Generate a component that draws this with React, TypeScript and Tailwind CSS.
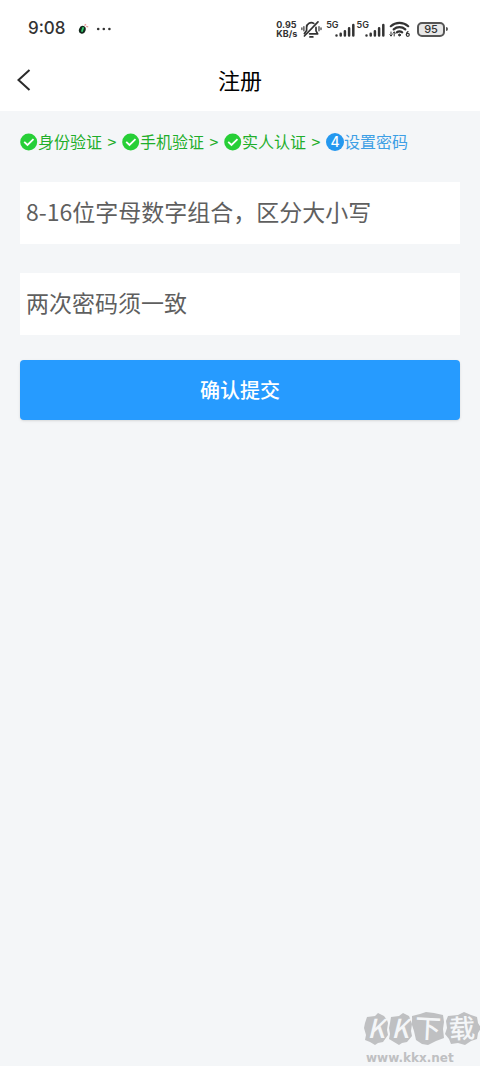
const steps = [
  { id: 1, label: "身份验证", done: true },
  { id: 2, label: "手机验证", done: true },
  { id: 3, label: "实人认证", done: true },
  { id: 4, label: "设置密码", done: false },
];

const fields = [
  { id: "password", label: "密码", placeholder: "8-16位字母数字组合，区分大小写" },
  { id: "confirm", label: "确认密码", placeholder: "两次密码须一致" },
];

function Signal() {
  return (
    <div className="flex items-start">
      <span className="text-[9px] leading-[10px] font-semibold">5G</span>
      <svg className="-ml-1 mt-0.5 h-4 w-5" viewBox="0 0 20 16" fill="none" stroke="#333" strokeWidth="2.5" strokeLinecap="round">
        <path d="M1.5 13.4v.1M5.7 11.7v1.8M9.9 9.2v4.3M14.1 6.2v7.3M18.3 3v10.5" />
      </svg>
    </div>
  );
}

function StatusBar() {
  return (
    <div className="flex h-[58px] items-center justify-between pr-8 pl-7 font-['Inter',sans-serif] text-[#333]">
      <div className="flex items-center">
        <span className="text-[17px] font-medium">9:08</span>
        <svg className="ml-3 size-3" viewBox="0 0 12 12" fill="none">
          <ellipse cx="4.3" cy="6.8" rx="3.3" ry="4" transform="rotate(20 4.3 6.8)" fill="#15281d" />
          <path d="M5.3 4.2 3.8 8.8" stroke="#35cf70" strokeWidth="1.8" />
          <path d="M6.5 2.6 8 1.2M8.2 3.4l2 .5" stroke="#e99b9b" strokeWidth="1.3" />
        </svg>
        <svg className="ml-1.5 h-1 w-4" viewBox="0 0 16 4" fill="#333">
          <circle cx="2.2" cy="2" r="1.3" />
          <circle cx="7.8" cy="2" r="1.3" />
          <circle cx="13.4" cy="2" r="1.3" />
        </svg>
      </div>
      <div className="flex items-center">
        <div className="text-[9px] leading-[9px] font-bold">
          <p>0.95</p>
          <p>KB/s</p>
        </div>
        <svg className="mx-1 h-5 w-[21px]" viewBox="0 0 21 20" fill="none" stroke="#333" strokeWidth="1.7" strokeLinecap="round" strokeLinejoin="round">
          <path d="M5.6 11.6V8.4a4.7 4.7 0 0 1 7.2-4M15 8.4v3.4l1.7 3H8.6M3.4 17 17 2.8M3.4 14.6l2.2-3" />
          <path d="M9 17.9h2.8" strokeWidth="1.8" />
          <path d="M2.9 7.6v4.2M.9 8.8v1.8M18 7.6v4.2M20 8.8v1.8" strokeWidth="1.2" />
        </svg>
        <div className="flex gap-0.5">
          <Signal />
          <Signal />
        </div>
        <svg className="mr-1.5 ml-1 h-[18px] w-[22px]" viewBox="0 0 22 18" fill="none" stroke="#333" strokeWidth="2.2" strokeLinecap="round">
          <path d="M1.8 6.2a13 13 0 0 1 17.4 0M4.7 9.4a8.7 8.7 0 0 1 11.6 0M7.8 12.4a4.2 4.2 0 0 1 5.4 0" />
          <circle cx="10.5" cy="15" r="1" fill="#333" strokeWidth="1" />
          <path d="M2 12v4M.8 14.8 2 16l1.2-1.2M5.2 16v-4M4 13.2 5.2 12l1.2 1.2" strokeWidth="1" />
          <circle cx="18.8" cy="14.8" r="1.5" strokeWidth="1.2" />
          <path d="M17.4 14.3c.1-1.4.8-2.3 1.6-2.7" strokeWidth="1.2" />
        </svg>
        <div className="flex items-center">
          <span className="flex h-[15px] w-7 items-center justify-center rounded-[5px] border-2 border-[#555] bg-[#e8e8e8] text-[11px] leading-none font-medium">
            95
          </span>
          <span className="ml-px h-1 w-0.5 rounded-r bg-[#555]" />
        </div>
      </div>
    </div>
  );
}

function StepIcon({ id, done }: { id: number; done: boolean }) {
  if (!done) {
    return (
      <span className="flex size-[18px] items-center justify-center rounded-full bg-[#2498ef] font-['Inter',sans-serif] text-sm leading-none font-medium text-white">
        {id}
      </span>
    );
  }
  return (
    <svg className="size-[18px]" viewBox="0 0 18 18" fill="none">
      <circle cx="8.7" cy="9" r="8.5" fill="#27cf37" />
      <path d="m4.2 8.8 3.3 3.2 6-5.8" stroke="#fff" strokeWidth="1.8" />
    </svg>
  );
}

function Watermark() {
  return (
    <div className="pointer-events-none absolute right-0 bottom-0 w-[118px]">
      <div className="relative">
        <svg className="h-[34px] w-full" viewBox="0 0 118 34" fill="#bfc0c2">
          <path d="m5 5 8-1 3-3 6 3 3 4 1 3-1 7 1 5-5 7-5 1-3 2-5-3-5-2 1-5-2-7 1-5z" />
          <path d="m29 5 8-1 4-3 6 3 2 5 1 3-1 7 1 5-5 6-5 1-3 2-5-3-5-3 1-5-1-6 1-5z" />
          <path d="m50 4 8-2 6-2 8 1 9 2 1 7-1 7 1 9-8 3-8 4-6-1-6-4-2-9-2-6z" />
          <path d="m86 4 10-1 6-3 7 3 6 2 1 6 3 5-3 5-1 6-6 2-6 4-7-2-7 1-2-5-4-5 2-6-1-7z" />
        </svg>
        <div className="absolute inset-0 grid grid-cols-[24px_24px_32px_36px] place-items-center pb-1 pl-0.5 text-[26px] leading-none font-medium text-[#f4f6f8]">
          <span className="italic">K</span>
          <span className="italic">K</span>
          <span className="rotate-3">下</span>
          <span className="-rotate-3">载</span>
        </div>
      </div>
      <p className="pt-1 pl-1 font-['DejaVu_Sans',sans-serif] text-xs leading-4 font-bold text-[#bfc0c2]">www.kkx.net</p>
    </div>
  );
}

export default function App() {
  return (
    <div className="relative flex min-h-screen flex-col bg-[#f4f6f8] font-['Noto_Sans_CJK_SC',sans-serif]">
      <header className="bg-white">
        <StatusBar />
        <div className="grid h-[53px] grid-cols-[48px_1fr_48px] items-start">
          <button type="button" aria-label="返回" className="flex h-11 items-center pl-4">
            <svg className="h-6 w-4" viewBox="0 0 16 24" fill="none" stroke="#2b2b2b" strokeWidth="2">
              <path d="M13.5 2 2.5 12l11 10" />
            </svg>
          </button>
          <h1 className="text-center text-[22px] leading-[42px] text-black">注册</h1>
        </div>
      </header>

      <main className="px-5 pt-[18px]">
        <ol className="flex items-center text-base leading-6">
          {steps.map((step, index) => (
            <li key={step.id} className={`flex items-center ${step.done ? "text-[#1fae2b]" : "text-[#3d9fe5]"}`}>
              <StepIcon id={step.id} done={step.done} />
              <span className="pb-0.5">{step.label}</span>
              {index < steps.length - 1 && <span className="w-5 pb-0.5 text-center">&gt;</span>}
            </li>
          ))}
        </ol>

        <form className="mt-[27px]" onSubmit={(e) => e.preventDefault()}>
          <div className="flex flex-col gap-[29px]">
            {fields.map((field) => (
              <input
                key={field.id}
                id={field.id}
                type="password"
                aria-label={field.label}
                placeholder={field.placeholder}
                className="block h-[62px] w-full bg-white px-1.5 pb-1 text-[23px] text-[#333] outline-none placeholder:text-[#5f5f5f]"
              />
            ))}
          </div>
          <button type="submit" className="mt-[25px] h-[60px] w-full rounded bg-[#269bff] text-xl font-medium text-white shadow-sm">
            确认提交
          </button>
        </form>
      </main>

      <Watermark />
    </div>
  );
}
